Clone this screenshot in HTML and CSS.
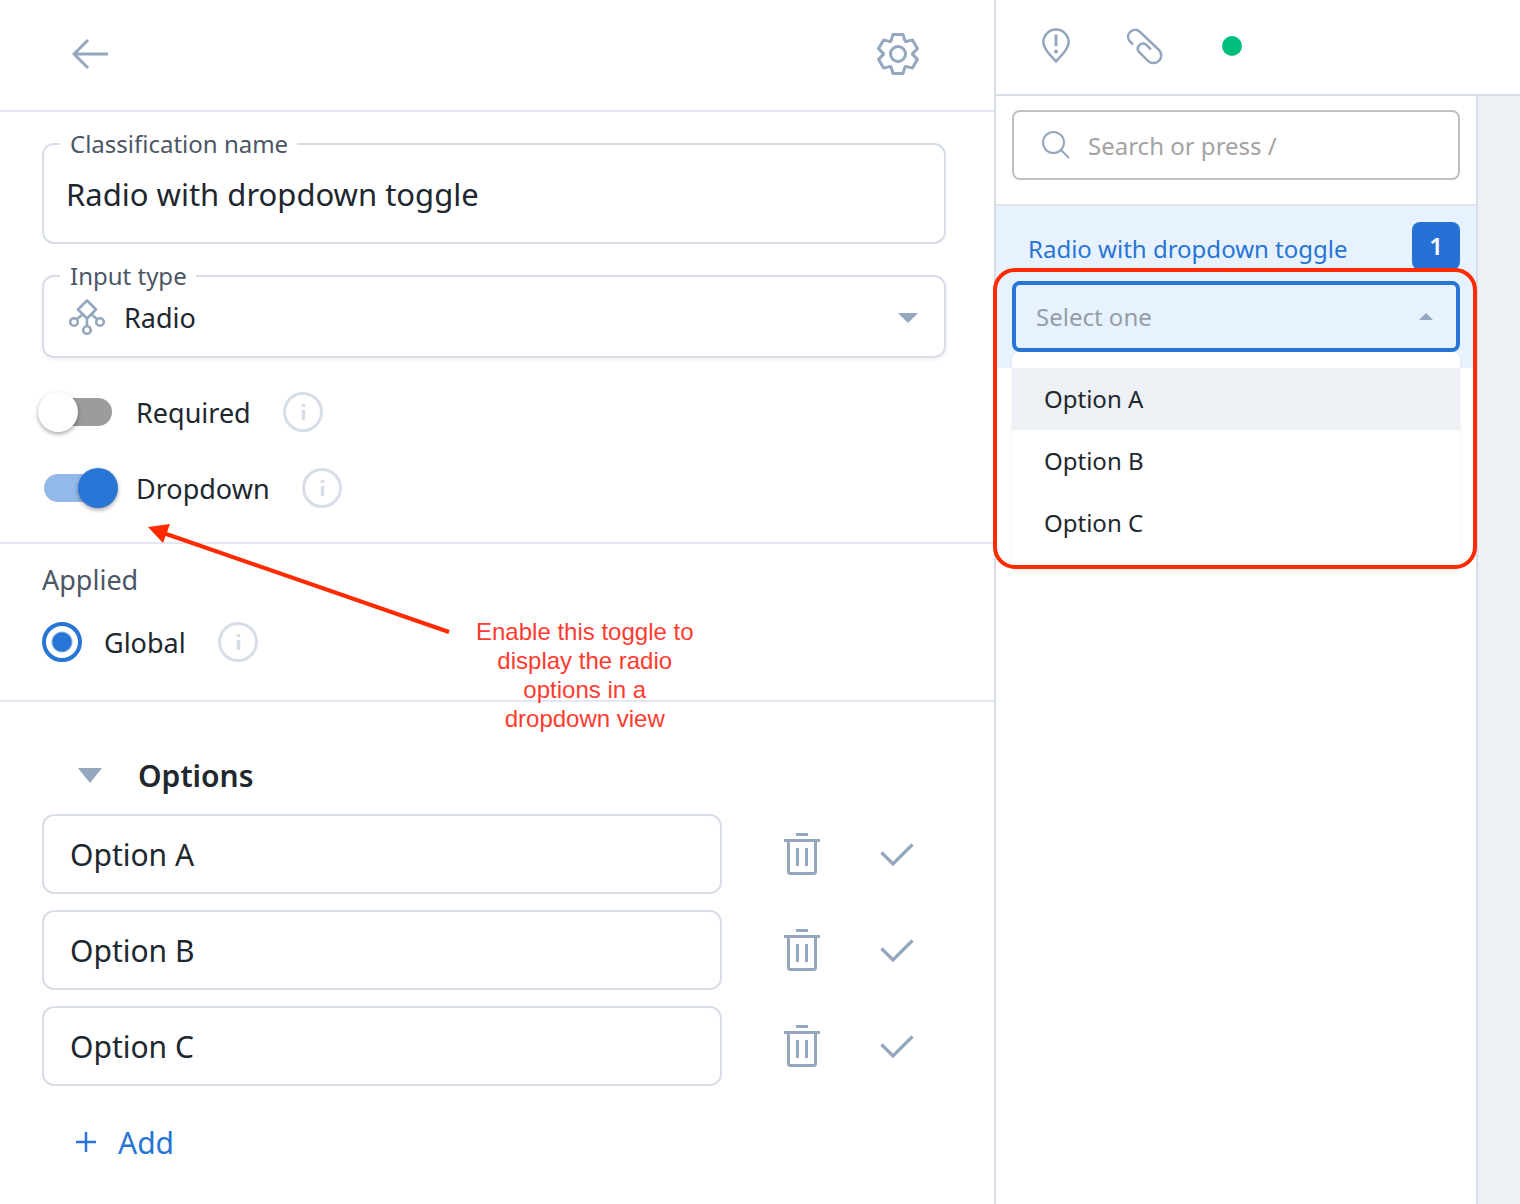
FILE: index.html
```html
<!DOCTYPE html>
<html lang="en">
<head>
	<meta charset="utf-8">
	<meta name="viewport" content="width=device-width, initial-scale=1">
	<title>Classification editor</title>
	<link rel="stylesheet" href="styles.css">
</head>
<body>
	<svg class="sprite" aria-hidden="true">
		<symbol id="info" viewBox="0 0 40 40">
			<circle cx="20" cy="20" r="18.5" fill="none" stroke="currentColor" stroke-width="3"/>
			<path d="M20.5 12v3M20.5 18v10" fill="none" stroke="currentColor" stroke-width="3.5"/>
		</symbol>
		<symbol id="trash" viewBox="0 0 48 48">
			<path d="M18 4.5h12M6 10.500h36M10.5 10.5v31a2 2 0 0 0 2 2h23a2 2 0 0 0 2-2v-31M19.5 18v18M28.5 18v18" fill="none" stroke="currentColor" stroke-width="3"/>
		</symbol>
		<symbol id="check" viewBox="0 0 48 48">
			<path d="M7.5 22.5L19 34L38.5 14.5" fill="none" stroke="currentColor" stroke-width="3.2"/>
		</symbol>
	</svg>

	<main class="editor">
		<header class="editor-head">
			<button class="icon-btn" type="button" aria-label="Back">
				<svg width="36" height="42" viewBox="0 0 36 42"><path d="M16 7L2 21l14 14M2 21h34" fill="none" stroke="currentColor" stroke-width="3"/></svg>
			</button>
			<button class="icon-btn" type="button" aria-label="Settings">
				<svg width="44" height="44" viewBox="-22 -22 44 44">
					<path d="M-6.5-14.5L-5-19.5H5L6.5-14.5Q7-11.5 9.3-12.9L14.4-14.1L19.4-5.4L15.8-1.6Q13 0 15.8 1.6L19.4 5.4L14.4 14.1L9.3 12.9Q7 11.5 6.5 14.5L5 19.5H-5L-6.5 14.5Q-7 11.5-9.3 12.9L-14.4 14.1L-19.4 5.4L-15.8 1.6Q-13 0-15.8-1.6L-19.4-5.4L-14.4-14.1L-9.3-12.9Q-7-11.5-6.5-14.5Z" fill="none" stroke="currentColor" stroke-width="3" stroke-linejoin="round"/>
					<circle r="7.5" fill="none" stroke="currentColor" stroke-width="3"/>
				</svg>
			</button>
		</header>

		<section class="section basics">
			<fieldset class="field">
				<legend><label for="name">Classification name</label></legend>
				<input class="field-input" id="name" type="text" value="Radio with dropdown toggle">
			</fieldset>
			<fieldset class="field field-type">
				<legend><label for="type">Input type</label></legend>
				<div class="type-row">
					<svg class="type-icon" width="36" height="36" viewBox="0 0 36 36" fill="none" stroke="currentColor" stroke-width="2.6" stroke-linejoin="round">
						<path d="M18 1.5l9 9-9 9-9-9zM18 19.5V27M13.5 15.5L8 20M22.5 15.5L28 20"/>
						<circle cx="5" cy="23" r="3.8"/><circle cx="18" cy="31" r="3.8"/><circle cx="31" cy="23" r="3.8"/>
					</svg>
					<select class="type-select" id="type">
						<option>Radio</option>
					</select>
					<svg class="type-arrow" width="20" height="12" viewBox="0 0 20 12"><path d="M0 2h20L10 12z" fill="currentColor"/></svg>
				</div>
			</fieldset>

			<div class="toggles">
				<div class="toggle-row">
					<input class="switch" id="required" type="checkbox">
					<label for="required">Required</label>
					<svg class="info" width="40" height="40"><use href="#info"/></svg>
				</div>
				<div class="toggle-row">
					<input class="switch" id="dropdown" type="checkbox" checked>
					<label for="dropdown">Dropdown</label>
					<svg class="info" width="40" height="40"><use href="#info"/></svg>
				</div>
			</div>
		</section>

		<section class="section applied">
			<h2 class="applied-title">Applied</h2>
			<div class="radio-row">
				<input class="radio" id="global" type="radio" name="applied" checked>
				<label for="global">Global</label>
				<svg class="info" width="40" height="40"><use href="#info"/></svg>
			</div>
		</section>

		<section class="options">
			<button class="options-head" type="button">
				<svg width="24" height="16" viewBox="0 0 24 16"><path d="M0 1h24L12 16z" fill="currentColor"/></svg>
				<span>Options</span>
			</button>
			<div class="option-row">
				<input class="option-input" type="text" value="Option A" aria-label="Option 1">
				<button class="icon-btn trash" type="button" aria-label="Delete"><svg width="48" height="48"><use href="#trash"/></svg></button>
				<button class="icon-btn" type="button" aria-label="Confirm"><svg width="48" height="48"><use href="#check"/></svg></button>
			</div>
			<div class="option-row">
				<input class="option-input" type="text" value="Option B" aria-label="Option 2">
				<button class="icon-btn trash" type="button" aria-label="Delete"><svg width="48" height="48"><use href="#trash"/></svg></button>
				<button class="icon-btn" type="button" aria-label="Confirm"><svg width="48" height="48"><use href="#check"/></svg></button>
			</div>
			<div class="option-row">
				<input class="option-input" type="text" value="Option C" aria-label="Option 3">
				<button class="icon-btn trash" type="button" aria-label="Delete"><svg width="48" height="48"><use href="#trash"/></svg></button>
				<button class="icon-btn" type="button" aria-label="Confirm"><svg width="48" height="48"><use href="#check"/></svg></button>
			</div>
			<button class="add" type="button">
				<svg width="20" height="20" viewBox="0 0 20 20"><path d="M10 0v20M0 10h20" stroke="currentColor" stroke-width="2.5"/></svg>
				<span>Add</span>
			</button>
		</section>

		<!-- arrow and note that point at the dropdown switch -->
		<div class="note">
			<svg width="304" height="110" viewBox="0 0 304 110">
				<path d="M14 5.500L301 105" stroke="currentColor" stroke-width="4"/>
				<path d="M0 0l22-3-7 19z" fill="currentColor"/>
			</svg>
			<p>Enable this toggle to<br>display the radio<br>options in a<br>dropdown view</p>
		</div>
	</main>

	<div class="preview">
		<header class="preview-head">
			<button class="icon-btn tool" type="button" aria-label="Issues">
				<svg width="44" height="44" viewBox="0 0 44 44" fill="none" stroke="currentColor" stroke-width="2.5">
					<path d="M22 37.3C18 33 9.3 25.5 9.3 18.3a12.7 12.7 0 0 1 25.4 0C34.7 25.5 26 33 22 37.3z"/>
					<path d="M22 10.5v11.500" stroke-width="3"/><circle cx="22" cy="27.5" r="2" fill="currentColor" stroke="none"/>
				</svg>
			</button>
			<button class="icon-btn tool" type="button" aria-label="Attachments">
				<svg width="44" height="44" viewBox="0 0 44 44" fill="none" stroke="currentColor" stroke-width="2.5">
					<path d="M11 20.5L7.5 17A7 7 0 0 1 17 7L37 26A7.6 7.6 0 0 1 26 36.8L17 28A5.2 5.2 0 0 1 24 20.5L29 25.5"/>
				</svg>
			</button>
			<div class="tool"><span class="status"></span></div>
		</header>
		<div class="preview-body">
			<aside class="sidebar">
				<label class="search">
					<svg width="28" height="28" viewBox="0 0 28 28" fill="none" stroke="currentColor" stroke-width="2"><circle cx="11.5" cy="11.5" r="10.5"/><path d="M19 19l8 8"/></svg>
					<input type="search" placeholder="Search or press /" aria-label="Search">
				</label>
				<div class="class-item">
					<div class="class-head">
						<label class="class-name" for="answer">Radio with dropdown toggle</label>
						<span class="hotkey">1</span>
					</div>
					<div class="answer">
						<select class="answer-select" id="answer">
							<option>Select one</option>
						</select>
						<svg class="answer-arrow" width="14" height="8" viewBox="0 0 14 8"><path d="M0 7L7 0l7 7z" fill="currentColor"/></svg>
						<ul class="menu">
							<li class="active">Option A</li>
							<li>Option B</li>
							<li>Option C</li>
						</ul>
						<div class="highlight"></div>
					</div>
				</div>
			</aside>
			<div class="canvas"></div>
		</div>
	</div>
</body>
</html>
```

FILE: styles.css
```css
*{margin: 0;padding: 0;box-sizing: border-box;}
body{display: flex;min-height: 100vh;background: #fff;color: #21272e;font-family: "Noto Sans", sans-serif;font-size: 27px;}
svg{display: block;flex-shrink: 0;}
button, input, select{font: inherit;color: inherit;background: none;border: 0;outline: 0;}
.sprite{position: absolute;width: 0;height: 0;}
.icon-btn{color: #94a7bf;cursor: pointer;}
.info{color: #d7dee8;}

/* left panel */
.editor{flex: 1;min-width: 0;position: relative;}
.editor-head{display: flex;align-items: center;justify-content: space-between;height: 112px;padding: 0 74px 2px 72px;border-bottom: 2px solid #e2e7f1;}
.section{padding: 0 48px 0 42px;border-bottom: 2px solid #e2e7f1;}
.basics{padding-top: 20px;padding-bottom: 34px;}
.field{border: 2px solid #d7dde8;border-radius: 12px;min-width: 0;}
.field legend{margin-left: 16px;padding: 0 9px 0 10px;font-size: 24px;line-height: 24px;color: #4b5666;}
.field-input{display: block;width: 100%;height: 76px;margin-bottom: 10px;padding: 0 22px;font-size: 31px;}
.field-type{margin-top: 20px;box-shadow: 0 2px 4px rgba(0,0,0,0.06);}
.type-row{display: grid;grid-template-columns: 36px 1fr 20px;align-items: center;height: 58px;margin-bottom: 10px;padding: 0 26px 0 25px;}
.type-icon, .type-arrow{color: #94a7bf;grid-row: 1;pointer-events: none;}
.type-icon{grid-column: 1;}
.type-arrow{grid-column: 3;}
.type-select{appearance: none;grid-row: 1;grid-column: 1 / -1;height: 58px;padding-left: 55px;}
.toggles{display: flex;flex-direction: column;gap: 36px;margin-top: 34px;}
.toggle-row, .radio-row{display: flex;align-items: center;height: 40px;}
.toggle-row .info, .radio-row .info{margin-left: 32px;}

/* switch: the track and the thumb share one grid cell */
.switch{appearance: none;display: grid;align-items: center;width: 80px;height: 40px;margin: 0 18px 0 -4px;cursor: pointer;}
.switch::before{content: "";grid-area: 1 / 1;height: 28px;margin: 0 6px;border-radius: 14px;background: #9c9c9c;}
.switch::after{content: "";grid-area: 1 / 1;width: 40px;height: 40px;border-radius: 50%;background: #fff;box-shadow: 0 2px 4px rgba(0,0,0,0.35);}
.switch:checked::before{background: #93b9ea;}
.switch:checked::after{justify-self: end;background: #2775d5;}

.applied{padding-top: 18px;padding-bottom: 38px;}
.applied-title{margin-bottom: 24px;font-size: 27px;font-weight: normal;line-height: 36px;color: #4b5666;}
.radio{appearance: none;width: 40px;height: 40px;margin-right: 22px;border: 4px solid #2775d5;border-radius: 50%;background: radial-gradient(circle, #2775d5 9px, #fff 11px);}

.options{padding: 52px 48px 42px 42px;}
.options-head{display: flex;align-items: center;gap: 36px;height: 42px;margin-bottom: 18px;padding-left: 36px;font-size: 30px;font-weight: 600;}
.options-head svg{color: #94a7bf;}
.option-row{display: flex;align-items: center;gap: 48px;margin-bottom: 16px;padding-right: 24px;}
.option-input{flex: 1;min-width: 0;height: 80px;padding: 0 26px;border: 2px solid #d7dde8;border-radius: 12px;font-size: 30px;}
.trash{margin-left: 8px;}
.add{display: flex;align-items: center;gap: 22px;height: 42px;margin-top: 35px;padding-left: 34px;font-size: 30px;color: #2775d5;}

.note{position: absolute;left: 148px;top: 527px;display: flex;gap: 24px;color: #ff2a00;}
.note svg{overflow: visible;}
.note p{padding-top: 90px;font-family: "Liberation Sans", sans-serif;font-size: 24px;line-height: 29px;text-align: center;white-space: nowrap;color: #ff3b2f;}

/* right panel */
.preview{flex: 0 0 526px;display: flex;flex-direction: column;border-left: 2px solid #d7dde8;font-size: 24px;}
.preview-head{display: flex;align-items: center;height: 96px;padding: 0 16px 2px;border-bottom: 2px solid #d7dde8;}
.tool{display: flex;justify-content: center;width: 88px;}
.status{width: 20px;height: 20px;border-radius: 50%;background: #00bf7c;}
.preview-body{flex: 1;display: flex;}
.sidebar{width: 482px;border-right: 2px solid #d7dde8;}
.canvas{flex: 1;background: #edf0f5;}
.search{display: flex;align-items: center;gap: 18px;height: 70px;margin: 14px 16px 24px;padding: 0 28px;border: 2px solid #c0c0c0;border-radius: 8px;}
.search svg{color: #94a7bf;}
.search input{flex: 1;min-width: 0;}
.search input::placeholder{color: #a3a3a3;}
.class-item{padding: 16px;border-top: 2px solid #dfe6ef;background: #e8f2fe;}
.class-head{display: flex;align-items: center;justify-content: space-between;margin-bottom: 11px;padding-left: 16px;color: #2775d5;}
.class-name{padding-top: 4px;}
.hotkey{width: 48px;height: 48px;border-radius: 8px;background: #2671d5;color: #fff;font-size: 24px;font-weight: 600;line-height: 48px;text-align: center;}
.answer{position: relative;display: grid;align-items: center;}
.answer-select{appearance: none;grid-area: 1 / 1;height: 71px;padding: 0 20px;border: 4px solid #2775d5;border-radius: 8px;color: #949ea9;}
.answer-arrow{grid-area: 1 / 1;justify-self: end;margin-right: 27px;color: #94a7bf;pointer-events: none;}
.menu{position: absolute;left: 0;right: 0;top: 100%;padding: 16px 0 14px;border-radius: 8px;background: #fff;box-shadow: 0 2px 6px rgba(0,0,0,0.05);list-style: none;}
.menu li{padding-left: 32px;line-height: 62px;}
.menu .active{background: #edf0f5;}
.highlight{position: absolute;left: -19px;right: -17px;top: -13px;height: 301px;border: 4px solid #ff2a00;border-radius: 22px;pointer-events: none;}
```
